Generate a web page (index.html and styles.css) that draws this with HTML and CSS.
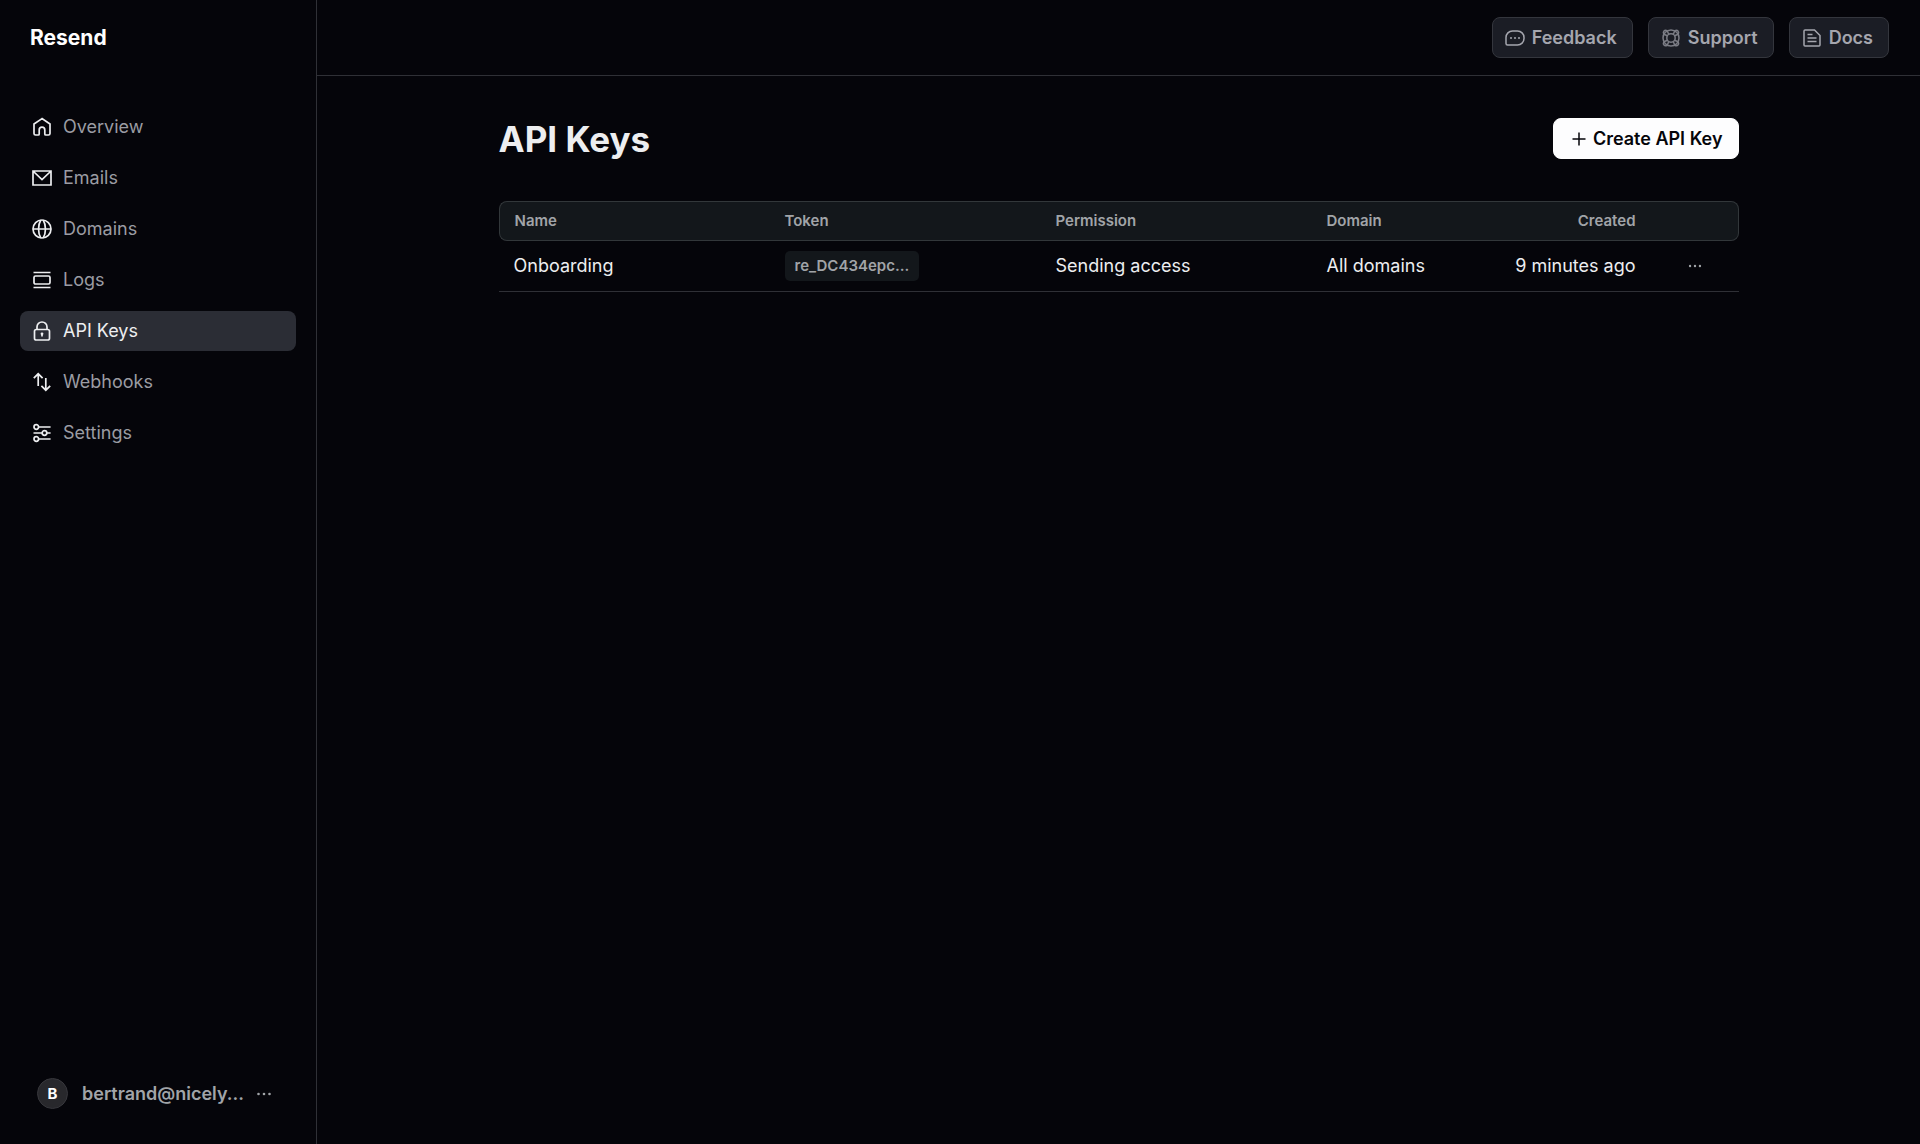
FILE: index.html
```html
<!DOCTYPE html>
<html lang="en">
<head>
    <meta charset="UTF-8">
    <meta name="viewport" content="width=device-width, initial-scale=1.0">
    <link rel="stylesheet" href="styles.css">
    <title>API Keys · Resend</title>
</head>
<body>

<div class="app">
    <aside class="sidebar">
        <a class="logo" href="#">Resend</a>

        <nav class="nav">
            <a class="nav-link" href="#">
                <svg class="icon" viewBox="0 0 20 20"><path d="M10 1.600 2 7V16.400a1.600 1.600 0 0 0 1.600 1.600H6.200a1 1 0 0 0 1-1V13a2.800 2.800 0 0 1 5.600 0V17a1 1 0 0 0 1 1H16.400a1.600 1.600 0 0 0 1.600-1.600V7Z"/></svg>
                Overview
            </a>
            <a class="nav-link" href="#">
                <svg class="icon" viewBox="0 0 20 20"><path d="M1 3h18v14H1ZM1.500 3.500l8.500 8 8.500-8"/></svg>
                Emails
            </a>
            <a class="nav-link" href="#">
                <svg class="icon" viewBox="0 0 20 20"><circle cx="10" cy="10" r="9"/><path d="M1 10h18M8.800 1C5.800 6 5.800 14 8.800 19M11.200 1c3 5 3 13 0 18"/></svg>
                Domains
            </a>
            <a class="nav-link" href="#">
                <svg class="icon" viewBox="0 0 20 20"><path d="M1.500 2.500h17M1.500 17.500h17"/><rect x="2" y="6" width="16" height="8" rx="1.500"/></svg>
                Logs
            </a>
            <a class="nav-link active" href="#">
                <svg class="icon" viewBox="0 0 20 20"><rect x="2.500" y="8.500" width="15" height="10.500" rx="1.800"/><path d="M5 8.500V6a5 5 0 0 1 10 0V8.500M10 12.500v3"/><circle class="dot" cx="10" cy="12.800" r="1.400"/></svg>
                API Keys
            </a>
            <a class="nav-link" href="#">
                <svg class="icon" viewBox="0 0 20 20"><path d="M6.200 14V2M1.800 6.200 6.200 1.800l4.400 4.400M13.800 6v12M9.400 13.800l4.400 4.400 4.400-4.400"/></svg>
                Webhooks
            </a>
            <a class="nav-link" href="#">
                <svg class="icon" viewBox="0 0 20 20"><circle cx="4.300" cy="4" r="2.300"/><circle cx="12.500" cy="10" r="2.300"/><circle cx="4.300" cy="16" r="2.300"/><path d="M6.600 4h12M1.500 10h8.700M14.800 10h3.800M6.600 16h12"/></svg>
                Settings
            </a>
        </nav>

        <div class="account">
            <span class="avatar">B</span>
            <span class="email">bertrand@nicely...</span>
            <button class="more" type="button" aria-label="Account menu">
                <svg class="icon-dots" viewBox="0 0 20 20"><circle cx="4.500" cy="10" r="1.300"/><circle cx="10" cy="10" r="1.300"/><circle cx="15.500" cy="10" r="1.300"/></svg>
            </button>
        </div>
    </aside>

    <div class="content">
        <header class="topbar">
            <button class="btn" type="button">
                <svg class="icon" viewBox="0 0 20 20"><path d="M7.500 3h5a6.500 6.500 0 0 1 6.500 6.500v1a6.500 6.500 0 0 1-6.500 6.500H2.500A1.500 1.500 0 0 1 1 15.500v-6A6.500 6.500 0 0 1 7.500 3Z"/><circle class="dot" cx="6" cy="10" r="1"/><circle class="dot" cx="10" cy="10" r="1"/><circle class="dot" cx="14" cy="10" r="1"/></svg>
                Feedback
            </button>
            <button class="btn" type="button">
                <svg class="icon icon-dim" viewBox="0 0 20 20"><circle cx="10" cy="10" r="8"/><circle cx="10" cy="10" r="4.200"/><path d="M7.800 6.500 6.200 2.800M6.500 7.800 2.800 6.200M12.200 6.500l1.600-3.700M13.500 7.800l3.700-1.600M7.800 13.500l-1.600 3.700M6.500 12.200l-3.700 1.600M12.200 13.500l1.600 3.700M13.500 12.200l3.700 1.600"/><path d="M6.200 2.800C3.500 1.500 1.500 3.500 2.800 6.200M13.800 2.800c2.700-1.300 4.700.7 3.400 3.400M6.200 17.200c-2.700 1.300-4.700-.7-3.400-3.400M13.800 17.200c2.700 1.300 4.700-.7 3.400-3.400"/></svg>
                Support
            </button>
            <button class="btn" type="button">
                <svg class="icon" viewBox="0 0 20 20"><path d="M3 2h9.500L18 7.500V17a1 1 0 0 1-1 1H3a1 1 0 0 1-1-1V3a1 1 0 0 1 1-1ZM5.500 6.500h5M5.500 10h9M5.500 13.500h9"/></svg>
                Docs
            </button>
        </header>

        <main class="page">
            <div class="page-head">
                <h1>API Keys</h1>
                <button class="btn btn-primary" type="button">
                    <svg class="icon" viewBox="0 0 20 20"><path d="M10 3.500v13M3.500 10h13"/></svg>
                    Create API Key
                </button>
            </div>

            <table class="keys">
                <thead>
                    <tr>
                        <th class="col-wide">Name</th>
                        <th class="col-wide">Token</th>
                        <th class="col-wide">Permission</th>
                        <th>Domain</th>
                        <th class="col-created">Created</th>
                        <th class="col-more"></th>
                    </tr>
                </thead>
                <tbody>
                    <tr>
                        <td>Onboarding</td>
                        <td><code class="token">re_DC434epc...</code></td>
                        <td>Sending access</td>
                        <td>All domains</td>
                        <td class="col-created">9 minutes ago</td>
                        <td class="col-more">
                            <button class="more" type="button" aria-label="Key actions">
                                <svg class="icon-dots" viewBox="0 0 20 20"><circle cx="4.500" cy="10" r="1.300"/><circle cx="10" cy="10" r="1.300"/><circle cx="15.500" cy="10" r="1.300"/></svg>
                            </button>
                        </td>
                    </tr>
                </tbody>
            </table>
        </main>
    </div>
</div>

</body>
</html>
```
FILE: styles.css
```css
* {
    box-sizing: border-box;
}

body {
    margin: 0;
    background-color: #05050a;
    color: #edeef0;
    font-family: Inter, 'Liberation Sans', sans-serif;
    font-size: 18px;
    line-height: 24px;
}

a {
    color: inherit;
    text-decoration: none;
}

button {
    font: inherit;
    cursor: pointer;
}

.app {
    display: flex;
    min-height: 100vh;
}

/* icons */
.icon {
    width: 20px;
    height: 20px;
    flex: none;
    fill: none;
    stroke: currentColor;
    stroke-width: 1.5;
}

.icon .dot,
.icon-dots {
    fill: currentColor;
    stroke: none;
}

.icon-dots {
    display: block;
    width: 20px;
    height: 20px;
}

/* sidebar */
.sidebar {
    width: 317px;
    flex: none;
    display: flex;
    flex-direction: column;
    padding: 0 20px;
    border-right: 1px solid #2f3036;
}

.logo {
    display: flex;
    align-items: center;
    height: 76px;
    padding-left: 10px;
    color: #fff;
    font-size: 21px;
    font-weight: 700;
}

.nav {
    display: flex;
    flex-direction: column;
    gap: 11px;
    margin-top: 31px;
}

.nav-link {
    display: flex;
    align-items: center;
    gap: 11px;
    height: 40px;
    padding: 0 12px;
    border-radius: 8px;
    color: #9b9ca3;
}

.nav-link .icon {
    color: #edeef0;
    stroke-width: 1.7;
}

.nav-link.active {
    background-color: #2b2d35;
    color: #edeef0;
}

.account {
    display: flex;
    align-items: center;
    gap: 14px;
    margin-top: auto;
    padding: 0 17px 35px;
    color: #a1a4a8;
    font-weight: 600;
}

.account .more {
    margin-left: -4px;
}

.avatar {
    display: flex;
    align-items: center;
    justify-content: center;
    flex: none;
    width: 31px;
    height: 31px;
    border: 1px solid #37373c;
    border-radius: 50%;
    background-color: #28282c;
    color: #fff;
    font-size: 15px;
    font-weight: 700;
}

.more {
    padding: 0;
    border: none;
    background: none;
    color: #a1a4a8;
}

/* main column */
.content {
    flex: 1;
    min-width: 0;
}

.topbar {
    display: flex;
    align-items: center;
    justify-content: flex-end;
    gap: 15px;
    height: 76px;
    padding: 0 31px;
    border-bottom: 1px solid #2f3036;
}

.btn {
    display: flex;
    align-items: center;
    gap: 7px;
    height: 41px;
    padding: 0 15px 0 12px;
    border: 1px solid #34363d;
    border-radius: 8px;
    background-color: #1b1d25;
    color: #a5a6ae;
    font-weight: 600;
}

.icon-dim {
    opacity: 0.7;
}

.btn-primary {
    gap: 4px;
    padding: 0 15px;
    border-color: #fff;
    background-color: #fdfdfe;
    color: #05050a;
}

.page {
    max-width: 1300px;
    margin: 0 auto;
    padding: 42px 30px;
}

.page-head {
    display: flex;
    align-items: center;
    justify-content: space-between;
    margin-bottom: 42px;
}

h1 {
    margin: 0;
    font-size: 35px;
    font-weight: 700;
    line-height: 40px;
}

/* table */
.keys {
    width: 100%;
    table-layout: fixed;
    border-spacing: 0;
}

.keys th,
.keys td {
    padding: 0 15px;
    text-align: left;
}

.keys th {
    height: 40px;
    border: 1px solid #32373a;
    border-width: 1px 0;
    background-color: #13171b;
    color: #a1a4a8;
    font-size: 15px;
    font-weight: 600;
}

.keys th:first-child {
    border-left-width: 1px;
    border-radius: 8px 0 0 8px;
}

.keys th:last-child {
    border-right-width: 1px;
    border-radius: 0 8px 8px 0;
}

.keys td {
    height: 51px;
    border-bottom: 1px solid #2f3036;
}

.col-wide {
    width: 271px;
}

.keys .col-created {
    width: 180px;
    text-align: right;
}

.keys .col-more {
    width: 88px;
}

.col-more .more {
    display: block;
    margin: 0 auto;
}

.col-more .icon-dots {
    width: 18px;
    height: 18px;
}

.token {
    display: inline-block;
    padding: 3px 10px;
    border-radius: 5px;
    background-color: #13171b;
    color: #a1a4a8;
    font-family: inherit;
    font-size: 15px;
    font-weight: 600;
}
```
